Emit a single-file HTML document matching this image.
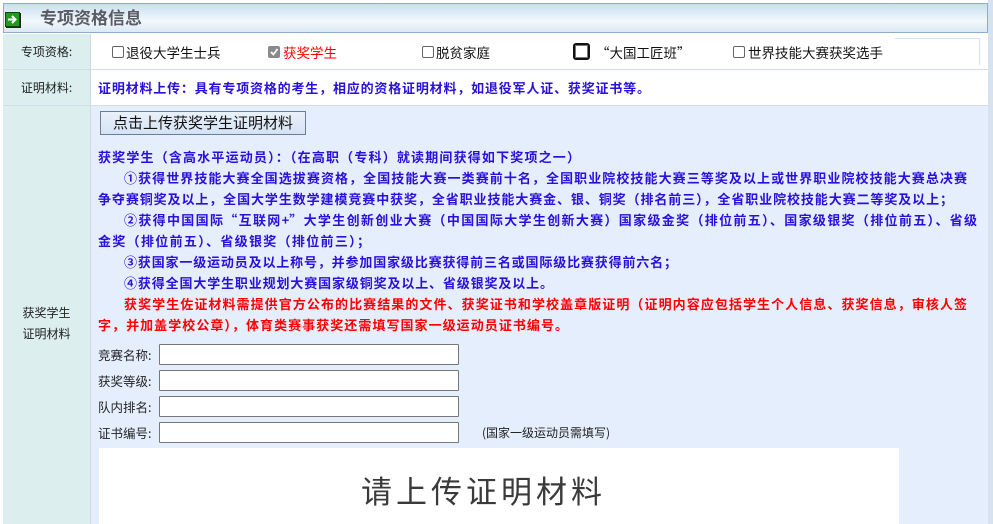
<!DOCTYPE html>
<html><head><meta charset="utf-8"><style>
*{margin:0;padding:0;box-sizing:border-box}
body{width:993px;height:524px;overflow:hidden;background:#fff;font-family:"Noto Sans CJK SC","Liberation Sans",sans-serif;position:relative}
.abs{position:absolute}
.hdr{left:3px;top:3px;width:985px;height:30px;border:1px solid #8eaccb;background:linear-gradient(#c9dfee,#f2f8fc 60%,#dbe9f3);}
.hdr .t{position:absolute;left:36px;top:1px;font-size:17px;font-weight:bold;color:#5b5b63;line-height:24px}
.ico{left:5px;top:12px;width:15px;height:15px;background:#1f9b1f;border:1px solid #0c4a0c;box-shadow:1px 1px 0 #222}
.lc{background:#dcefee;border-right:1px solid #c8dbe3;left:3px;width:88px;font-size:12px;color:#222;text-align:center}
.rc{left:91px;width:897px}
.hl{height:1px;background:#d2dde8;left:3px;width:985px}
.cb{width:12px;height:12px;border:1px solid #666;border-radius:2px;background:#fff}
.ct{font-size:13.5px;color:#111;top:42px;line-height:20px}
.line{position:absolute;left:98px;font-size:13px;font-weight:bold;color:#2a10dd;white-space:nowrap;line-height:18px;text-align:justify;text-align-last:justify;text-justify:inter-character}
.red{color:#ff0000}
.lab{position:absolute;left:98px;font-size:12.5px;color:#222;line-height:16px}
.inp{position:absolute;left:159px;width:300px;height:21px;border:1px solid #777;background:#fff;border-radius:1px}
</style></head><body>
<div class="abs hdr"><div class="t">专项资格信息</div></div>
<div class="abs ico"><svg width="13" height="13" viewBox="0 0 13 13" style="position:absolute;left:0;top:0"><path d="M2 6.5H9M6 3L9.5 6.5L6 10" stroke="#fff" stroke-width="2" fill="none"/></svg></div>
<div class="abs" style="left:988px;top:0;width:5px;height:524px;background:#d6e2ee"></div>
<div class="abs lc" style="top:34px;height:35px;line-height:35px">专项资格:</div>
<div class="abs hl" style="top:69px"></div>
<div class="abs cb" style="left:112px;top:46px"></div><div class="abs ct" style="left:126px">退役大学生士兵</div>
<div class="abs cb" style="left:268px;top:46px;background:#8a8a8a;border-color:#888"><svg width="10" height="10" style="position:absolute;left:0;top:0"><path d="M2 5L4.3 7.5L8.5 2" stroke="#fff" stroke-width="1.8" fill="none"/></svg></div><div class="abs ct" style="left:283px;color:#f00">获奖学生</div>
<div class="abs cb" style="left:422px;top:46px"></div><div class="abs ct" style="left:436px">脱贫家庭</div>
<div class="abs cb" style="left:573px;top:43px;width:17px;height:17px;border:2px solid #111;border-radius:3px;box-shadow:inset 0 0 0 1px #777"></div><div class="abs ct" style="left:596px">“大国工匠班”</div>
<div class="abs cb" style="left:733px;top:46px"></div><div class="abs ct" style="left:748px">世界技能大赛获奖选手</div>
<div class="abs" style="left:895px;top:38px;width:85px;height:27px;border-top:1px solid #d6e2ee;border-right:1px solid #d6e2ee"></div>
<div class="abs lc" style="top:70px;height:35px;line-height:35px">证明材料:</div>
<div class="abs hl" style="top:105px"></div>
<div class="line" style="top:79px;width:552px">证明材料上传：具有专项资格的考生，相应的资格证明材料，如退役军人证、获奖证书等。</div>
<div class="abs lc" style="top:106px;height:418px;"><div style="position:absolute;top:196px;width:100%;line-height:21px">获奖学生<br>证明材料</div></div>
<div class="abs rc" style="top:106px;height:418px;background:#e5eefd"></div>
<div class="abs" style="left:100px;top:111px;width:206px;height:24px;border:1px solid #6d7d94;background:linear-gradient(#eaf1fa,#d4e3f4);font-size:15px;color:#111;line-height:22px;text-align:center">点击上传获奖学生证明材料</div>
<div class="line" style="top:148px;width:482px">获奖学生（含高水平运动员）：（在高职（专科）就读期间获得如下奖项之一）</div>
<div class="line" style="top:169px;left:124px;width:843px">①获得世界技能大赛全国选拔赛资格，全国技能大赛一类赛前十名，全国职业院校技能大赛三等奖及以上或世界职业院校技能大赛总决赛</div>
<div class="line" style="top:190px;width:855px">争夺赛铜奖及以上，全国大学生数学建模竞赛中获奖，全省职业技能大赛金、银、铜奖（排名前三），全省职业院校技能大赛二等奖及以上；</div>
<div class="line" style="top:211px;left:124px;width:853px">②获得中国国际“互联网+”大学生创新创业大赛（中国国际大学生创新大赛）国家级金奖（排位前五）、国家级银奖（排位前五）、省级</div>
<div class="line" style="top:232px;width:272px">金奖（排位前五）、省级银奖（排位前三）；</div>
<div class="line" style="top:253px;left:124px;width:553px">③获国家一级运动员及以上称号，并参加国家级比赛获得前三名或国际级比赛获得前六名；</div>
<div class="line" style="top:274px;left:124px;width:429px">④获得全国大学生职业规划大赛国家级铜奖及以上、省级银奖及以上。</div>
<div class="line red" style="top:295px;left:124px;width:843px">获奖学生佐证材料需提供官方公布的比赛结果的文件、获奖证书和学校盖章版证明（证明内容应包括学生个人信息、获奖信息，审核人签</div>
<div class="line red" style="top:316px;width:470px">字，并加盖学校公章），体育类赛事获奖还需填写国家一级运动员证书编号。</div>
<div class="lab" style="top:347px">竞赛名称:</div><div class="inp" style="top:344px"></div>
<div class="lab" style="top:373px">获奖等级:</div><div class="inp" style="top:370px"></div>
<div class="lab" style="top:399px">队内排名:</div><div class="inp" style="top:396px"></div>
<div class="lab" style="top:425px">证书编号:</div><div class="inp" style="top:422px"></div>
<div class="lab" style="top:425px;left:482px;font-size:12px">(国家一级运动员需填写)</div>
<div class="abs" style="left:99px;top:448px;width:800px;height:76px;background:#fff"></div>
<div class="abs" style="left:361px;top:470px;font-size:31px;line-height:40px;color:#3a3a3a;letter-spacing:4px">请上传证明材料</div>
</body></html>
